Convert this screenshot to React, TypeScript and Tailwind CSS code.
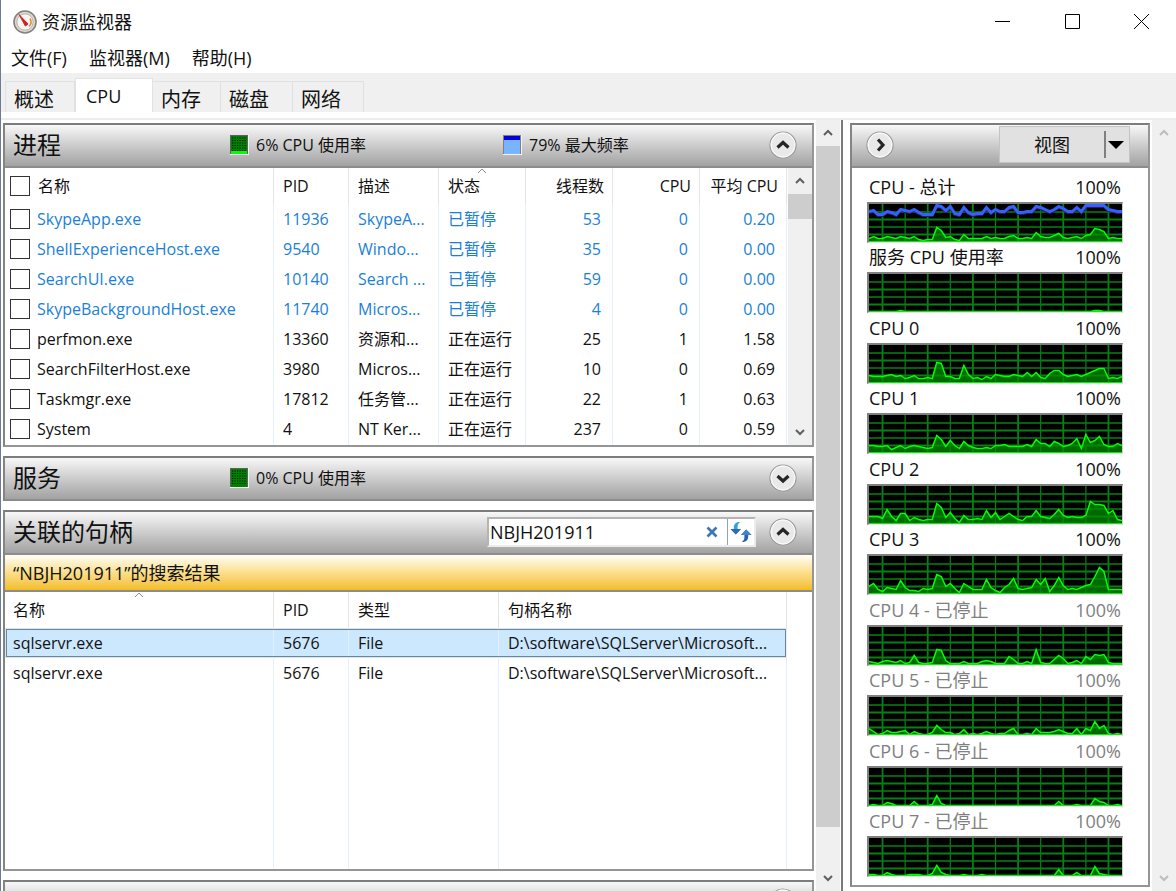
import { useState } from "react";
import type { ReactNode } from "react";

type Process = {
  name: string;
  pid: number;
  desc: string;
  threads: number;
  cpu: number;
  avg: string;
  suspended?: boolean;
};

const processes: Process[] = [
  { name: "SkypeApp.exe", pid: 11936, desc: "SkypeA...", threads: 53, cpu: 0, avg: "0.20", suspended: true },
  { name: "ShellExperienceHost.exe", pid: 9540, desc: "Windo...", threads: 35, cpu: 0, avg: "0.00", suspended: true },
  { name: "SearchUI.exe", pid: 10140, desc: "Search ...", threads: 59, cpu: 0, avg: "0.00", suspended: true },
  { name: "SkypeBackgroundHost.exe", pid: 11740, desc: "Micros...", threads: 4, cpu: 0, avg: "0.00", suspended: true },
  { name: "perfmon.exe", pid: 13360, desc: "资源和...", threads: 25, cpu: 1, avg: "1.58" },
  { name: "SearchFilterHost.exe", pid: 3980, desc: "Micros...", threads: 10, cpu: 0, avg: "0.69" },
  { name: "Taskmgr.exe", pid: 17812, desc: "任务管...", threads: 22, cpu: 1, avg: "0.63" },
  { name: "System", pid: 4, desc: "NT Ker...", threads: 237, cpu: 0, avg: "0.59" },
];

const handles = [
  { name: "sqlservr.exe", pid: 5676, type: "File", handle: "D:\\software\\SQLServer\\Microsoft..." },
  { name: "sqlservr.exe", pid: 5676, type: "File", handle: "D:\\software\\SQLServer\\Microsoft..." },
];

// One sample every 4.5 units on a 252 x 38 plot, counted from the bottom
const frequency = [
  30, 31, 27, 27, 30, 29, 27, 32, 31, 30, 32, 29, 27, 27, 27, 36, 35, 31, 35, 28, 27, 34, 29, 27, 28, 28, 34, 29, 32,
  30, 30, 34, 35, 29, 29, 30, 30, 35, 34, 32, 30, 32, 35, 33, 30, 30, 34, 30, 36, 36, 36, 36, 36, 32, 31, 30, 30,
];

const charts: { label: string; stopped?: boolean; line?: number[]; load: number[] }[] = [
  {
    label: "CPU - 总计",
    line: frequency,
    load: [
      3, 5, 3, 3, 5, 4, 3, 5, 4, 3, 5, 2, 1, 2, 2, 14, 11, 4, 5, 2, 1, 7, 3, 3, 3, 3, 5, 3, 4, 3, 3, 5, 6, 3, 3, 4,
      3, 9, 5, 4, 4, 6, 8, 4, 3, 4, 5, 3, 6, 7, 13, 12, 10, 3, 4, 3, 3,
    ],
  },
  {
    label: "服务 CPU 使用率",
    load: [
      0, 0, 0, 0, 0, 0, 0, 1, 0, 0, 0, 0, 0, 0, 0, 0, 0, 0, 0, 0, 0, 0, 0, 0, 0, 0, 0, 0, 0, 0, 0, 0, 0, 0, 0, 0,
      0, 0, 0, 0, 0, 0, 0, 0, 0, 0, 0, 0, 0, 0, 1, 1, 0, 0, 0, 0, 0,
    ],
  },
  {
    label: "CPU 0",
    load: [
      7, 6, 6, 6, 7, 8, 6, 7, 4, 5, 7, 4, 4, 5, 4, 20, 19, 6, 6, 4, 4, 17, 8, 4, 5, 3, 6, 4, 8, 7, 6, 6, 8, 7, 6, 10,
      6, 10, 5, 4, 9, 12, 12, 8, 6, 7, 8, 6, 8, 10, 12, 14, 14, 4, 5, 4, 6,
    ],
  },
  {
    label: "CPU 1",
    load: [
      7, 7, 6, 6, 7, 3, 5, 7, 4, 6, 7, 6, 5, 4, 5, 17, 13, 6, 12, 7, 4, 11, 7, 5, 4, 4, 5, 4, 7, 7, 8, 6, 6, 6, 6, 8,
      6, 13, 9, 9, 6, 11, 9, 6, 7, 9, 14, 4, 18, 10, 12, 16, 8, 6, 6, 9, 7,
    ],
  },
  {
    label: "CPU 2",
    load: [
      7, 7, 7, 5, 14, 7, 3, 10, 10, 3, 6, 4, 3, 4, 4, 20, 16, 6, 11, 5, 1, 8, 4, 4, 5, 4, 13, 6, 11, 4, 7, 10, 7, 4, 3, 7,
      7, 13, 7, 6, 5, 9, 14, 8, 6, 7, 6, 6, 8, 22, 19, 19, 18, 10, 13, 4, 3,
    ],
  },
  {
    label: "CPU 3",
    load: [
      7, 10, 4, 2, 6, 5, 4, 13, 6, 3, 3, 2, 5, 4, 5, 19, 17, 7, 10, 5, 1, 10, 7, 4, 4, 4, 14, 6, 3, 1, 6, 9, 15, 5, 4,
      5, 6, 14, 9, 15, 2, 8, 16, 8, 4, 5, 4, 6, 8, 9, 17, 26, 22, 4, 4, 4, 4,
    ],
  },
  {
    label: "CPU 4 - 已停止",
    stopped: true,
    load: [
      3, 2, 1, 3, 4, 3, 2, 4, 1, 2, 9, 2, 1, 1, 2, 15, 14, 4, 1, 1, 1, 3, 1, 1, 1, 3, 4, 3, 1, 1, 1, 8, 5, 1, 1, 3,
      1, 15, 2, 1, 1, 5, 9, 6, 1, 2, 4, 1, 8, 5, 10, 9, 10, 2, 1, 1, 1,
    ],
  },
  {
    label: "CPU 5 - 已停止",
    stopped: true,
    load: [
      6, 3, 0, 1, 4, 2, 2, 3, 4, 0, 3, 1, 0, 0, 2, 9, 5, 2, 2, 0, 1, 5, 0, 1, 0, 1, 3, 1, 0, 1, 1, 4, 6, 0, 0, 1, 0,
      6, 2, 2, 2, 3, 5, 3, 1, 1, 6, 0, 6, 4, 13, 6, 9, 1, 0, 1, 0,
    ],
  },
  {
    label: "CPU 6 - 已停止",
    stopped: true,
    load: [
      0, 1, 0, 0, 3, 2, 0, 0, 0, 0, 4, 0, 0, 0, 1, 10, 2, 0, 0, 0, 0, 0, 0, 0, 0, 0, 0, 0, 0, 0, 0, 0, 0, 0, 0, 0, 0,
      0, 0, 0, 0, 0, 4, 0, 0, 0, 1, 0, 0, 0, 7, 4, 3, 0, 0, 1, 0,
    ],
  },
  {
    label: "CPU 7 - 已停止",
    stopped: true,
    load: [
      1, 1, 0, 0, 3, 1, 0, 0, 0, 1, 1, 1, 0, 0, 2, 10, 3, 1, 0, 0, 0, 1, 0, 0, 0, 1, 0, 0, 0, 0, 0, 0, 0, 0, 0, 0, 0,
      0, 0, 0, 0, 0, 6, 0, 0, 0, 3, 0, 0, 0, 9, 2, 1, 0, 0, 0, 0,
    ],
  },
];

function toPoints(values: number[]) {
  return values.map((v, i) => `${i * 4.5},${37.5 - v}`).join(" ");
}

function Chart({ load, line }: { load: number[]; line?: number[] }) {
  return (
    <div className="h-[41px] border-2 border-b border-r border-[#808080] border-r-[#d0d0d0] border-b-[#e3e3e3] bg-black">
      <svg viewBox="0 0 252 38" preserveAspectRatio="none" className="block h-full w-full">
        {[8, 15.5, 23, 30.5].map((y, i) => (
          <path key={y} d={`M0 ${y}H252`} stroke="#078015" strokeWidth={i % 2 ? 2 : 1.3} />
        ))}
        {Array.from({ length: 11 }, (_, i) => (
          <path key={i} d={`M${13.5 + i * 22.5} 0V38`} stroke="#078015" strokeWidth={i % 2 ? 1.2 : 1.8} />
        ))}
        <polygon points={`0,38 ${toPoints(load)} 252,38`} fill="#008c00" fillOpacity="0.75" />
        <polyline points={toPoints(load)} fill="none" stroke="#00ff00" strokeWidth="1.5" />
        <path d="M0 37.5H252" stroke="#00f000" />
        {line && (
          <>
            <polyline points={toPoints(line.map((v) => v - 1))} fill="none" stroke="#401060" strokeWidth="3" />
            <polyline points={toPoints(line)} fill="none" stroke="#2f62ff" strokeWidth="3" />
          </>
        )}
      </svg>
    </div>
  );
}

function RoundButton({ dir, label }: { dir: "up" | "down" | "right"; label: string }) {
  const d = { up: "M8.5 16.5 14 11.5l5.5 5", down: "M8.5 12 14 17l5.500-5", right: "M12 8.500 17 14l-5 5.500" }[dir];
  return (
    <button type="button" aria-label={label} className="shrink-0">
      <svg width="28" height="28" viewBox="0 0 28 28" fill="none">
        <circle cx="14" cy="14" r="13" fill="#e9e9e9" stroke="#989898" strokeWidth="1.2" />
        <circle cx="14" cy="14" r="11.800" stroke="#fafafa" strokeWidth="1.2" />
        <path d={d} stroke="#262626" strokeWidth="3.2" />
      </svg>
    </button>
  );
}

function ScrollArrow({ dir, faded }: { dir: "up" | "down"; faded?: boolean }) {
  return (
    <button
      type="button"
      aria-label={dir === "up" ? "向上滚动" : "向下滚动"}
      className="flex h-[26px] w-full shrink-0 items-center justify-center"
    >
      <svg width="10" height="8" viewBox="0 0 10 8" fill="none">
        <path d={dir === "up" ? "M1 6 5 2l4 4" : "M1 2l4 4 4-4"} stroke={faded ? "#bdbdbd" : "#606060"} strokeWidth="2" />
      </svg>
    </button>
  );
}

function SortMark() {
  return (
    <svg width="10" height="6" viewBox="0 0 10 6" fill="none" className="absolute top-0 left-1/2 -translate-x-1/2">
      <path d="M1 5 5 1l4 4" stroke="#8a8a8a" />
    </svg>
  );
}

const panel = "border-2 border-[#969696] border-t-[#7c7c7c] border-l-[#848484]";
const headerBar = "flex h-[43px] shrink-0 items-center border-b-2 border-[#8c8c8c] bg-linear-to-b from-[#f8f8f8] to-[#a2a2a2] pb-0.5";

function PanelHeader({ title, children }: { title?: string; children?: ReactNode }) {
  return (
    <div className={`${headerBar} pr-[15px] pl-2`}>
      {title && <h2 className="text-2xl whitespace-nowrap">{title}</h2>}
      {children}
    </div>
  );
}

function UsageSwatch({ level }: { level: "low" | "none" | "frequency" }) {
  if (level === "frequency") {
    return (
      <svg width="19" height="20" viewBox="0 0 19 20" className="shrink-0">
        <path d="M0 0h19v20H0z" fill="#f4f4f4" />
        <path d="M0 0h18v19H0z" fill="#808080" />
        <path d="M1 1h16v18H1z" fill="#78b4ff" />
        <path d="M1 1h16v4H1z" fill="#0000dc" />
      </svg>
    );
  }
  return (
    <svg width="19" height="20" viewBox="0 0 19 20" className="shrink-0">
      <path d="M0 0h19v20H0z" fill="#f4f4f4" />
      <path d="M0 0h18v19H0z" fill="#606060" />
      <path d="M1 1h16v18H1z" fill="#008000" />
      <path
        d="M2 3h15M2 5.500h15M2 8h15M2 10.500h15M2 13h15M2 15.500h15"
        stroke="#001c00"
        strokeWidth="1.2"
        strokeDasharray="1.2 1.3"
      />
      {level === "low" && <path d="M1 16h16v3H1z" fill="#00ff00" />}
    </svg>
  );
}

const headLine = "border-r border-[#e4e4e4]";
const bodyLine = "border-r border-[#e3effb]";
const checkbox = "block size-5 shrink-0 appearance-none border border-[#333] bg-white checked:bg-[#505050]";

function ProcessPanel() {
  return (
    <section className={`shrink-0 ${panel}`}>
      <PanelHeader title="进程">
        <div className="ml-[169px] flex items-center gap-[7px]">
          <UsageSwatch level="low" />
          <span>6% CPU 使用率</span>
        </div>
        <div className="ml-[137px] flex items-center gap-[7px]">
          <UsageSwatch level="frequency" />
          <span>79% 最大频率</span>
        </div>
        <div className="ml-auto flex">
          <RoundButton dir="up" label="折叠进程" />
        </div>
      </PanelHeader>
      <div className="flex h-[277px]">
        <table className="h-full min-w-0 flex-1 table-fixed border-separate border-spacing-0 text-left whitespace-nowrap">
          <colgroup>
            <col />
            <col className="w-[75px]" />
            <col className="w-[90px]" />
            <col className="w-[87px]" />
            <col className="w-[87px]" />
            <col className="w-[87px]" />
            <col className="w-[87px]" />
          </colgroup>
          <thead>
            <tr className="h-9">
              <th className={`pl-[5px] font-normal ${headLine}`}>
                <label className="flex items-center gap-2">
                  <input type="checkbox" className={checkbox} />
                  名称
                </label>
              </th>
              <th className={`pl-[9px] font-normal ${headLine}`}>PID</th>
              <th className={`pl-[9px] font-normal ${headLine}`}>描述</th>
              <th className={`relative pl-[9px] font-normal ${headLine}`}>
                <SortMark />
                状态
              </th>
              <th className={`pr-2 text-right font-normal ${headLine}`}>线程数</th>
              <th className={`pr-2 text-right font-normal ${headLine}`}>CPU</th>
              <th className={`pr-2 text-right font-normal ${headLine}`}>平均 CPU</th>
            </tr>
          </thead>
          <tbody>
            {processes.map((p) => (
              <tr key={p.pid} className={p.suspended ? "h-[30px] text-[#1a7fd8]" : "h-[30px]"}>
                <td className={`pl-[5px] ${bodyLine}`}>
                  <label className="flex items-center gap-[7px]">
                    <input type="checkbox" className={checkbox} />
                    {p.name}
                  </label>
                </td>
                <td className={`pl-[9px] ${bodyLine}`}>{p.pid}</td>
                <td className={`pl-[9px] ${bodyLine}`}>{p.desc}</td>
                <td className={`pl-[9px] ${bodyLine}`}>{p.suspended ? "已暂停" : "正在运行"}</td>
                <td className={`pr-[11px] text-right ${bodyLine}`}>{p.threads}</td>
                <td className={`pr-[11px] text-right ${bodyLine}`}>{p.cpu}</td>
                <td className={`pr-[11px] text-right ${bodyLine}`}>{p.avg}</td>
              </tr>
            ))}
            <tr>
              {Array.from({ length: 7 }, (_, i) => (
                <td key={i} className={bodyLine} />
              ))}
            </tr>
          </tbody>
        </table>
        <div className="ml-px flex w-6 shrink-0 flex-col bg-[#f0f0f0]">
          <ScrollArrow dir="up" />
          <div className="h-[25px] bg-[#cdcdcd]" />
          <div className="flex-1" />
          <ScrollArrow dir="down" />
        </div>
      </div>
    </section>
  );
}

function HandlesPanel() {
  const [query, setQuery] = useState("NBJH201911");
  return (
    <section className={`shrink-0 ${panel}`}>
      <PanelHeader title="关联的句柄">
        <div className="mr-[13px] ml-auto flex h-[30px] w-[269px] items-center border-2 border-[#b4b4b4] border-r-[#ececec] border-b-[#ececec] bg-white">
          <input
            type="text"
            aria-label="搜索句柄"
            value={query}
            onChange={(e) => setQuery(e.target.value)}
            className="min-w-0 flex-1 pl-px text-lg leading-6 outline-none"
          />
          <button type="button" aria-label="清除" onClick={() => setQuery("")} className="mr-2">
            <svg width="14" height="14" viewBox="0 0 14 14" fill="none">
              <path d="M2.500 2.500l9 9M11.500 2.500l-9 9" stroke="#3a76b8" strokeWidth="2.6" />
            </svg>
          </button>
          <button type="button" aria-label="刷新" className="flex h-full items-center border-l border-[#8fa5b2] px-0.5">
            <svg width="22" height="22" viewBox="0 0 22 22">
              <path d="M10 1C6 1 3.800 3 3.800 6.500V8H.5l5.300 5.500L11 8H7.600V6c0-2.200.6-3.400 2.400-5Z" fill="#35a0e0" />
              <path d="M5.800 13.500.5 8H11Z" fill="#3268b4" />
              <path d="M12 21c4 .2 6.200-2 6.200-5.500V14h3.300L16.200 8.500 11 14h3.400v2c0 2.200-.6 3.400-2.400 5Z" fill="#2a5fae" />
              <path d="M16.200 8.500 21.500 14H11Z" fill="#3f86cc" />
            </svg>
          </button>
        </div>
        <RoundButton dir="up" label="折叠关联的句柄" />
      </PanelHeader>
      <div className="flex h-[37px] items-center border-b-2 border-[#8c8c8c] bg-linear-to-b from-[#fffdf6] via-[#fbdf8b] to-[#f3bc1c] pl-2 text-lg">
        “NBJH201911”的搜索结果
      </div>
      <div className="flex h-[277px]">
        <table className="h-full min-w-0 flex-1 table-fixed border-separate border-spacing-0 text-left whitespace-nowrap">
          <colgroup>
            <col />
            <col className="w-[75px]" />
            <col className="w-[150px]" />
            <col className="w-[288px]" />
          </colgroup>
          <thead>
            <tr className="h-9">
              <th className={`relative pl-2 font-normal ${headLine}`}>
                <SortMark />
                名称
              </th>
              <th className={`pl-[9px] font-normal ${headLine}`}>PID</th>
              <th className={`pl-[9px] font-normal ${headLine}`}>类型</th>
              <th className={`pl-[9px] font-normal ${headLine}`}>句柄名称</th>
            </tr>
          </thead>
          <tbody>
            {handles.map((h, i) => (
              <tr
                key={i}
                className={
                  i === 0 ? "h-[30px] bg-[#cce8ff] outline outline-[#76838e] -outline-offset-2" : "h-[30px]"
                }
              >
                <td className={`pl-2 ${bodyLine}`}>{h.name}</td>
                <td className={`pl-[9px] ${bodyLine}`}>{h.pid}</td>
                <td className={`pl-[9px] ${bodyLine}`}>{h.type}</td>
                <td className={`pl-[9px] ${bodyLine}`}>{h.handle}</td>
              </tr>
            ))}
            <tr>
              {Array.from({ length: 4 }, (_, i) => (
                <td key={i} className={bodyLine} />
              ))}
            </tr>
          </tbody>
        </table>
        <div className="w-[25px] shrink-0" />
      </div>
    </section>
  );
}

const tabs = [
  { label: "概述", width: "w-[70px]" },
  { label: "CPU", width: "w-[78px]" },
  { label: "内存", width: "w-[68px]" },
  { label: "磁盘", width: "w-[72px]" },
  { label: "网络", width: "w-[71px]" },
];

export default function App() {
  return (
    <div className="flex h-screen flex-col overflow-hidden border-l border-[#6b7c93] bg-white font-['Open_Sans','Noto_Sans_CJK_SC',sans-serif] text-base leading-6 text-[#111]">
      <header className="flex h-[43px] shrink-0 items-center pl-3">
        <svg width="24" height="24" viewBox="0 0 24 24" fill="none">
          <circle cx="12" cy="12" r="11" fill="#dedbd6" stroke="#85817c" strokeWidth="1.6" />
          <circle cx="12" cy="12" r="8.200" fill="#f7f6f3" stroke="#b4b0a9" />
          <path d="M17 8.500a6.500 6.500 0 0 1-1 8" stroke="#e58a3a" strokeWidth="1.6" />
          <path d="M6 4.500 15 14l-2.600 2Z" fill="#d42020" stroke="#d42020" />
        </svg>
        <h1 className="ml-[5px] text-lg">资源监视器</h1>
        <div className="ml-auto flex">
          <button type="button" aria-label="最小化" className="flex h-[43px] w-[70px] items-center justify-center">
            <svg width="15" height="15" viewBox="0 0 15 15">
              <path d="M0 7.500h15" stroke="#000" />
            </svg>
          </button>
          <button type="button" aria-label="最大化" className="flex h-[43px] w-[70px] items-center justify-center">
            <svg width="15" height="15" viewBox="0 0 15 15" fill="none">
              <path d="M.5.5h14v14H.5z" stroke="#000" />
            </svg>
          </button>
          <button type="button" aria-label="关闭" className="flex h-[43px] w-[69px] items-center justify-center">
            <svg width="15" height="15" viewBox="0 0 15 15">
              <path d="M0 0l15 15M15 0 0 15" stroke="#000" />
            </svg>
          </button>
        </div>
      </header>

      <nav className="flex h-[30px] shrink-0 items-center gap-[22px] pl-2.5 text-lg">
        <button type="button">文件(F)</button>
        <button type="button">监视器(M)</button>
        <button type="button">帮助(H)</button>
      </nav>

      <div role="tablist" className="flex h-[39px] shrink-0 items-end bg-[#f0f0f0] pl-1 text-xl">
        {tabs.map((t) =>
          t.label === "CPU" ? (
            <button
              key={t.label}
              type="button"
              role="tab"
              aria-selected="true"
              className={`h-[34px] border border-b-0 border-[#e2e2e2] bg-white pl-2.5 text-left text-lg ${t.width}`}
            >
              {t.label}
            </button>
          ) : (
            <button
              key={t.label}
              type="button"
              role="tab"
              aria-selected="false"
              className={`h-[31px] border-t border-r border-[#e0e0e0] pt-1 pl-2 text-left first:border-l ${t.width}`}
            >
              {t.label}
            </button>
          ),
        )}
      </div>
      <div className="h-2 shrink-0 border-b-2 border-[#ececec]" />

      <main className="flex min-h-0 flex-1">
        <div className="flex min-w-0 flex-1 overflow-hidden border-r-2 border-[#7a7a7a]">
          <div className="flex min-w-0 flex-1 flex-col gap-[9px] px-0.5 pt-[3px]">
            <ProcessPanel />
            <section className={`shrink-0 ${panel} border-b-0`}>
              <PanelHeader title="服务">
                <div className="ml-[169px] flex items-center gap-[7px]">
                  <UsageSwatch level="none" />
                  <span>0% CPU 使用率</span>
                </div>
                <div className="ml-auto flex">
                  <RoundButton dir="down" label="展开服务" />
                </div>
              </PanelHeader>
            </section>
            <HandlesPanel />
            <section className={`shrink-0 ${panel} border-b-0`}>
              <PanelHeader>
                <div className="ml-auto flex">
                  <RoundButton dir="down" label="展开" />
                </div>
              </PanelHeader>
            </section>
          </div>
          <div className="mr-px flex w-6 shrink-0 flex-col bg-[#f0f0f0]">
            <ScrollArrow dir="up" />
            <div className="flex-1 bg-[#cdcdcd]" />
            <div className="h-[38px]" />
            <ScrollArrow dir="down" />
          </div>
        </div>

        <div className="flex w-[333px] shrink-0">
          <aside className={`mt-[3px] mr-0.5 mb-1 ml-[7px] flex min-w-0 flex-1 flex-col ${panel}`}>
            <div className={`${headerBar} pl-3.5`}>
              <RoundButton dir="right" label="隐藏图表" />
              <button
                type="button"
                className="mr-[18px] ml-auto flex h-[37px] w-[131px] items-center border border-[#c4c4c4] bg-[#e1e1e1] text-lg"
              >
                <span className="flex-1">视图</span>
                <span className="flex h-[27px] items-center border-l-2 border-[#808080] pr-[5px] pl-0.5">
                  <svg width="16" height="8" viewBox="0 0 16 8">
                    <path d="M0 0h16L8 8Z" fill="#000" />
                  </svg>
                </span>
              </button>
            </div>
            <div className="grid flex-1 auto-rows-fr pt-1 pr-[25px] pb-2 pl-[15px]">
              {charts.map((c) => (
                <figure key={c.label} className="flex min-h-0 flex-col">
                  <figcaption
                    className={
                      c.stopped
                        ? "flex flex-1 items-center justify-between px-0.5 text-lg leading-6 text-[#808080]"
                        : "flex flex-1 items-center justify-between px-0.5 text-lg leading-6"
                    }
                  >
                    <span>{c.label}</span>
                    <span>100%</span>
                  </figcaption>
                  <Chart load={c.load} line={c.line} />
                </figure>
              ))}
            </div>
          </aside>
          <div className="flex w-6 shrink-0 flex-col justify-between bg-[#f0f0f0]">
            <ScrollArrow dir="up" faded />
            <ScrollArrow dir="down" faded />
          </div>
        </div>
      </main>
    </div>
  );
}
